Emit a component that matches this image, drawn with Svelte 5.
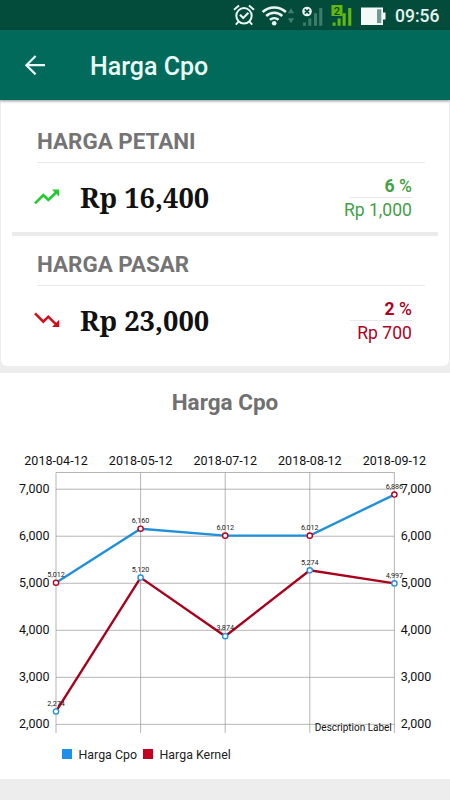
<script>
    const prices = [
        { title: "HARGA PETANI", price: "Rp 16,400", percent: "6", change: "Rp 1,000", trend: "up" },
        { title: "HARGA PASAR", price: "Rp 23,000", percent: "2", change: "Rp 700", trend: "down" },
    ];

    const dates = ["2018-04-12", "2018-05-12", "2018-07-12", "2018-08-12", "2018-09-12"];
    const ticks = [7000, 6000, 5000, 4000, 3000, 2000];
    const series = [
        { name: "Harga Kernel", color: "#a9001c", dot: "#2592dc", values: [2274, 5120, 3874, 5274, 4997] },
        { name: "Harga Cpo", color: "#2090d8", dot: "#b9001f", values: [5012, 6160, 6012, 6012, 6886] },
    ];

    const left = 56;
    const right = 394.4;
    const top = 32.5;
    const bottom = 293;

    const x = (i) => left + (i * (right - left)) / (dates.length - 1);
    const y = (v) => 49.2 + (7000 - v) * 0.04703;
    const line = (values) => values.map((v, i) => `${x(i)},${y(v)}`).join(" ");
    const format = (v) => v.toLocaleString("en-US");
</script>

<div class="screen">
    <div class="statusbar">
        <svg width="165" height="30" viewBox="0 0 165 30">
            <!-- alarm -->
            <g fill="none" stroke="#e9f5f1" stroke-width="2">
                <circle cx="19" cy="15.8" r="7.7" />
                <path d="M9 9.8l5-4.2M29 9.8l-5-4.2M13.8 21.4l-3 3.3M24.2 21.4l3 3.3" />
                <path d="M15 14.8l3.2 3.2 5.2-5.3" stroke-width="2.2" />
            </g>
            <!-- wifi -->
            <g fill="none" stroke="#e9f5f1" stroke-width="2.5">
                <path d="M37.6 12a17 17 0 0 1 23.3 0" />
                <path d="M41.2 16a11.7 11.7 0 0 1 16.1 0" />
                <path d="M44.9 19.8a6.5 6.5 0 0 1 8.7 0" />
            </g>
            <circle cx="49.2" cy="23.3" r="2.3" fill="#e9f5f1" />
            <path d="M62.8 13.2l3.2-5 3.2 5zM62.8 18.2l3.2 5 3.2-5z" fill="#3b8070" />
            <!-- sim 1 -->
            <path d="M78 22.5h3v3.3h-3zM83.3 18.5h3v7.3h-3zM89 13.2h3v12.6h-3zM94.2 8h3.1v17.8h-3.1z" fill="#3b7c6b" />
            <circle cx="82" cy="11.5" r="4.8" fill="#eef5f1" />
            <path d="M79.8 9.3l4.4 4.4M84.2 9.3l-4.4 4.4" stroke="#064c3d" stroke-width="1.7" />
            <!-- sim 2 -->
            <path d="M107.6 22.5h3v3.3h-3zM112.6 18.5h3v7.3h-3zM117.6 13.2h3.1v12.6h-3.1zM123.2 8h3.1v17.8h-3.1z" fill="#62b90b" />
            <path d="M106.5 5h11v11h-11z" fill="#62b90b" />
            <text x="112" y="14.5" class="sim">2</text>
            <!-- battery -->
            <path d="M136 7.5h22v5h2.5v7H158v5.5h-22z" fill="#f3faf7" />
            <path d="M152 9.3h4.3v13.8H152z" fill="#719b90" />
        </svg>
        <span>09:56</span>
    </div>

    <header>
        <svg width="24" height="24" viewBox="0 0 24 24" fill="none" stroke="#eafaf6" stroke-width="2.2">
            <path d="M22 12.2H4.3M12.6 3l-9.2 9.2 9.2 9.2" />
        </svg>
        <h1>Harga Cpo</h1>
    </header>

    <main>
        <section class="card">
            {#each prices as item}
                <div class="item {item.trend}">
                    <h2>{item.title}</h2>
                    <div class="row">
                        <svg class="icon" width="26" height="16" viewBox="0 0 26 16">
                            {#if item.trend == "up"}
                                <path d="M1 14.3l8.3-8.2 5 4.8L22.5 3" fill="none" stroke="currentColor" stroke-width="2.5" />
                                <path d="M18 .6h7.2v7.2z" fill="currentColor" />
                            {:else}
                                <path d="M1 1.3l8.3 8.4 5-5 8 8" fill="none" stroke="currentColor" stroke-width="2.5" />
                                <path d="M18 15h7.2V7.8z" fill="currentColor" />
                            {/if}
                        </svg>
                        <span class="price">{item.price}</span>
                        <div class="change">
                            <span class="percent"><b>{item.percent}</b> %</span>
                            <span class="amount">{item.change}</span>
                        </div>
                    </div>
                </div>
            {/each}
        </section>

        <section class="chart">
            <h3>Harga Cpo</h3>
            <svg width="450" height="300" viewBox="0 0 450 300">
                <g class="grid">
                    <line x1={left} x2={right} y1={top} y2={top} />
                    {#each ticks as tick}
                        <line x1={left} x2={right} y1={y(tick)} y2={y(tick)} />
                    {/each}
                    {#each dates as date, i}
                        <line x1={x(i)} x2={x(i)} y1={top} y2={bottom} />
                    {/each}
                </g>

                <g class="axis">
                    {#each dates as date, i}
                        <text x={x(i)} y="25" text-anchor="middle" textLength="63.5">{date}</text>
                    {/each}
                    {#each ticks as tick}
                        <text x="49.5" y={y(tick) + 4} text-anchor="end" textLength="30.5">{format(tick)}</text>
                        <text x="400.8" y={y(tick) + 4} textLength="30.5">{format(tick)}</text>
                    {/each}
                </g>

                {#each series as s}
                    <polyline points={line(s.values)} fill="none" stroke={s.color} stroke-width="2.4" />
                {/each}
                {#each series as s}
                    {#each s.values as value, i}
                        <text class="value" x={x(i)} y={y(value) - 5.8} textLength="17.5">{format(value)}</text>
                        <circle cx={x(i)} cy={y(value)} r="2.6" fill="#fff" stroke={s.dot} stroke-width="1.4" />
                    {/each}
                {/each}
                <text class="description" x="391.8" y="291.3" textLength="77">Description Label</text>
            </svg>

            <div class="legend">
                <span class="cpo">Harga Cpo</span>
                <span class="kernel">Harga Kernel</span>
            </div>
        </section>
    </main>
</div>

<style>
    :global(body) {
        background-color: #ededed;
    }
    .screen {
        width: 450px;
        height: 800px;
        overflow: hidden;
        background-color: #ededed;
        font-family: Roboto, sans-serif;
    }
    h1, h2, h3 {
        margin: 0;
    }
    .statusbar {
        height: 30px;
        display: flex;
        justify-content: flex-end;
        align-items: center;
        padding-right: 10px;
        background-color: #034c3c;
    }
    .statusbar span {
        width: 45px;
        margin-left: 5px;
        padding-top: 2px;
        font-size: 17.5px;
        font-weight: 500;
        line-height: 24px;
        color: #e6f2ee;
    }
    .sim {
        font-size: 11px;
        font-weight: 500;
        text-anchor: middle;
        fill: #07493a;
    }
    header {
        position: relative;
        height: 70px;
        display: flex;
        align-items: center;
        gap: 43px;
        padding-left: 23px;
        box-sizing: border-box;
        background-color: #016a5a;
        box-shadow: 0 1px 3px rgba(0, 0, 0, 0.45);
    }
    header svg {
        margin-top: -1px;
    }
    h1 {
        padding-top: 3px;
        font-size: 25px;
        font-weight: 500;
        line-height: 30px;
        color: #eafaf6;
    }
    .card {
        height: 266px;
        margin: 0 1px 7px;
        padding: 0 11px;
        box-sizing: border-box;
        background-color: #fff;
        border-radius: 0 0 6px 6px;
    }
    .item {
        height: 123px;
        padding: 26px 13px 0 25px;
        box-sizing: border-box;
    }
    .item:first-child {
        height: 136px;
        border-bottom: 4px solid #ebebeb;
    }
    .item:first-child h2 {
        margin-top: 1px;
    }
    .item:last-child {
        padding-top: 14px;
    }
    h2 {
        height: 36px;
        box-sizing: border-box;
        border-bottom: 1px solid #e9e9ec;
        font-size: 22.4px;
        font-weight: 700;
        line-height: 28px;
        color: #747474;
    }
    .row {
        display: flex;
        align-items: flex-start;
        padding-right: 13px;
    }
    .icon {
        margin: 26px 0 0 -3px;
    }
    .up .icon {
        color: #20cb2e;
    }
    .down .icon {
        color: #d30e18;
    }
    .price {
        margin: 17px 0 0 20px;
        font-family: "Noto Serif", "DejaVu Serif Condensed", "DejaVu Serif", serif;
        font-size: 27.3px;
        font-weight: 700;
        line-height: 36px;
        white-space: nowrap;
        color: #111;
    }
    .change {
        margin: 10px 0 0 auto;
        display: flex;
        flex-direction: column;
        align-items: flex-end;
        font-size: 17.6px;
    }
    .up .change {
        color: #43a047;
    }
    .down .change {
        color: #b0001f;
    }
    .percent {
        width: 62px;
        height: 25px;
        box-sizing: border-box;
        border-bottom: 1px solid #e6e8ec;
        font-weight: 500;
        line-height: 26px;
        text-align: right;
    }
    .amount {
        line-height: 25px;
    }
    .chart {
        height: 406px;
        background-color: #fff;
    }
    h3 {
        height: 67px;
        padding-top: 15px;
        box-sizing: border-box;
        font-size: 22.5px;
        font-weight: 700;
        line-height: 28px;
        text-align: center;
        color: #707070;
    }
    .chart svg {
        display: block;
    }
    .grid line {
        stroke: #959595;
        stroke-width: 0.7;
    }
    .axis {
        font-size: 12.5px;
        fill: #111;
    }
    .value {
        font-size: 7.2px;
        text-anchor: middle;
        fill: #222;
    }
    .description {
        font-size: 10px;
        text-anchor: end;
        fill: #111;
    }
    .legend {
        display: flex;
        gap: 6px;
        padding: 5px 0 0 62px;
        font-size: 12.4px;
        line-height: 20px;
        color: #222;
    }
    .legend span {
        display: flex;
        align-items: center;
    }
    .legend span::before {
        content: "";
        width: 10px;
        height: 10px;
        margin-right: 6.5px;
        margin-bottom: 2px;
        background-color: #1e90e8;
    }
    .legend .kernel::before {
        background-color: #c50022;
    }
</style>
